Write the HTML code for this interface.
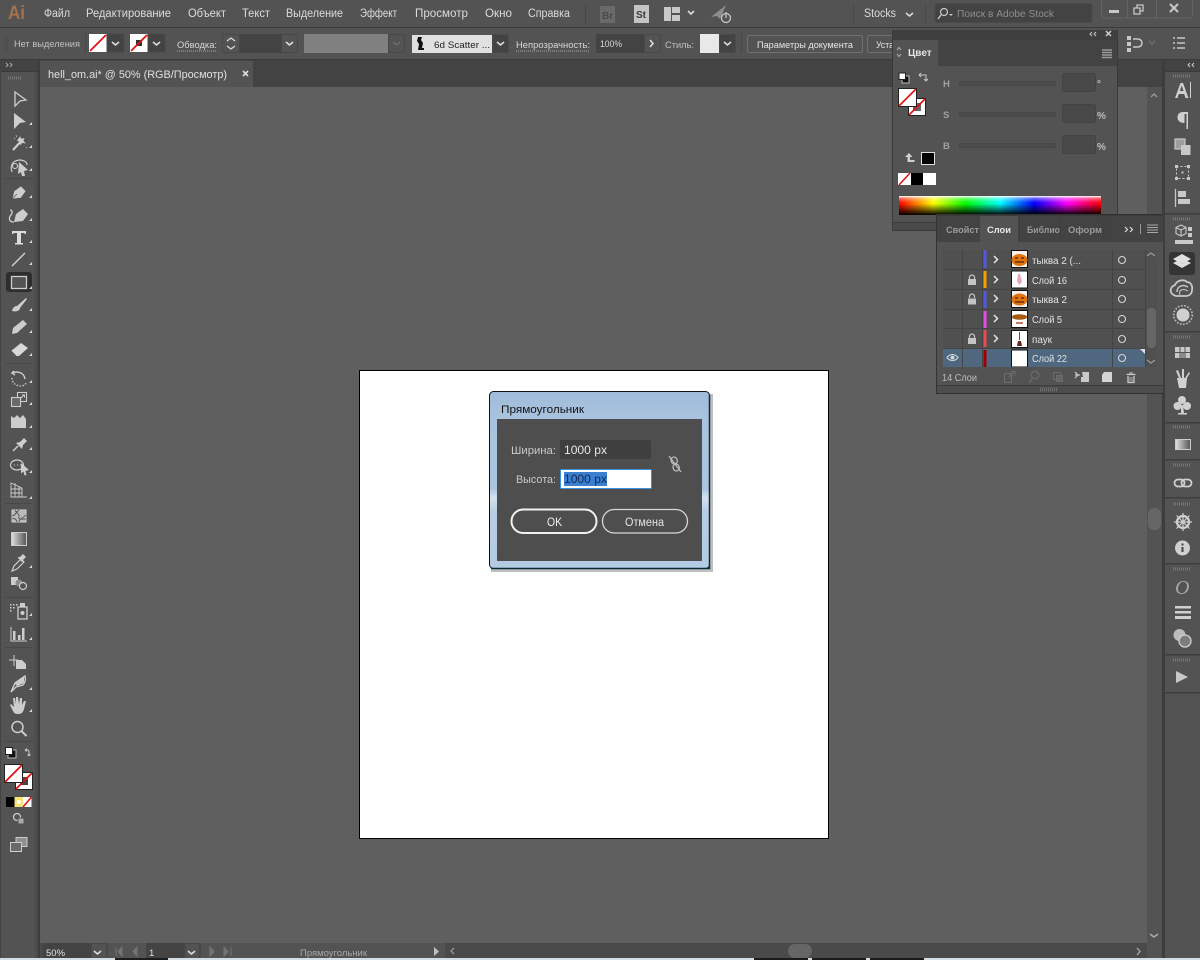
<!DOCTYPE html>
<html><head><meta charset="utf-8"><title>Illustrator</title>
<style>
html,body{margin:0;padding:0;background:#535353;width:1200px;height:960px;overflow:hidden}
svg{display:block;filter:blur(.3px)}
text{font-family:"Liberation Sans",sans-serif;font-size:11px;fill:#d4d4d4}
.m{font-size:11.5px;fill:#dcdcdc}
.c{font-size:9.5px;fill:#d8d8d8}
.ch{fill:none;stroke:#dcdcdc;stroke-width:1.6}
.d{fill:#434343}
.ln{font-size:10px;fill:#e2e2e2}
</style></head><body>
<svg width="1200" height="960" viewBox="0 0 1200 960" xmlns="http://www.w3.org/2000/svg">
<defs>
<linearGradient id="spec" x1="0" x2="1" y1="0" y2="0">
<stop offset="0" stop-color="#f00"/><stop offset=".17" stop-color="#ff0"/><stop offset=".33" stop-color="#0f0"/><stop offset=".5" stop-color="#0ff"/><stop offset=".67" stop-color="#00f"/><stop offset=".83" stop-color="#f0f"/><stop offset="1" stop-color="#f00"/></linearGradient>
<linearGradient id="specv" x1="0" x2="0" y1="0" y2="1">
<stop offset="0" stop-color="#fff"/><stop offset=".12" stop-color="#fff" stop-opacity=".4"/><stop offset=".35" stop-color="#fff" stop-opacity="0"/><stop offset=".4" stop-color="#000" stop-opacity="0"/><stop offset="1" stop-color="#000"/></linearGradient>
<linearGradient id="grad" x1="0" x2="1" y1="0" y2="0"><stop offset="0" stop-color="#e0e0e0"/><stop offset="1" stop-color="#555"/></linearGradient>
<linearGradient id="frame" x1="0" x2="0" y1="0" y2="1"><stop offset="0" stop-color="#a0bcd9"/><stop offset=".15" stop-color="#a9c3de"/><stop offset=".55" stop-color="#abc5df"/><stop offset=".6" stop-color="#d4e2ee"/><stop offset=".68" stop-color="#b7cde3"/><stop offset="1" stop-color="#b3cbe3"/></linearGradient>
</defs>

<!-- base -->
<rect width="1200" height="960" fill="#535353"/>
<rect x="0" y="27" width="1200" height="1" fill="#3a3a3a"/>
<rect x="0" y="59" width="1200" height="1" fill="#3a3a3a"/>
<!-- tab bar -->
<rect x="38" y="60" width="1125" height="27" fill="#434343"/>
<rect x="40" y="61" width="213" height="26" fill="#535353"/>
<text x="48" y="78" style="font-size:11px;fill:#e0e0e0" textLength="179" lengthAdjust="spacingAndGlyphs">hell_om.ai* @ 50% (RGB/Просмотр)</text>
<path d="M243 71l5 5M248 71l-5 5" stroke="#ddd" stroke-width="1.6"/>
<!-- canvas -->
<rect x="40" y="87" width="1107" height="856" fill="#5f5f5f"/>
<rect x="38" y="60" width="2" height="900" fill="#3d3d3d"/>
<!-- artboard -->
<rect x="359.5" y="370.5" width="469" height="468" fill="#fff" stroke="#000"/>
<!-- v scrollbar -->
<rect x="1147" y="87" width="15" height="856" fill="#535353"/>
<rect x="1162" y="60" width="3" height="900" fill="#3d3d3d"/>
<rect x="1148" y="508" width="13" height="22" rx="6" fill="#666"/>
<path d="M1151 97l3-3 3 3" fill="none" stroke="#999" stroke-width="1.4"/>
<path d="M1150 934l4 3 4-3" fill="none" stroke="#aaa" stroke-width="1.6"/>

<!-- menu bar -->
<text x="8" y="19" style="font-size:19px;font-weight:bold;fill:#a5714e" textLength="17" lengthAdjust="spacingAndGlyphs">Ai</text>
<text class="m" x="44" y="17" textLength="26" lengthAdjust="spacingAndGlyphs">Файл</text>
<text class="m" x="86" y="17" textLength="85" lengthAdjust="spacingAndGlyphs">Редактирование</text>
<text class="m" x="188" y="17" textLength="38" lengthAdjust="spacingAndGlyphs">Объект</text>
<text class="m" x="242" y="17" textLength="28" lengthAdjust="spacingAndGlyphs">Текст</text>
<text class="m" x="286" y="17" textLength="57" lengthAdjust="spacingAndGlyphs">Выделение</text>
<text class="m" x="360" y="17" textLength="37" lengthAdjust="spacingAndGlyphs">Эффект</text>
<text class="m" x="415" y="17" textLength="53" lengthAdjust="spacingAndGlyphs">Просмотр</text>
<text class="m" x="485" y="17" textLength="27" lengthAdjust="spacingAndGlyphs">Окно</text>
<text class="m" x="528" y="17" textLength="42" lengthAdjust="spacingAndGlyphs">Справка</text>
<rect x="585" y="4" width="1" height="20" fill="#484848"/>
<rect x="600" y="6" width="15" height="17" fill="#6a6a6a"/><text x="602" y="19" style="font-size:10px;fill:#4a4a4a;font-weight:bold">Br</text>
<rect x="634" y="5" width="15" height="18" fill="#c4c4c4"/><text x="636" y="18" style="font-size:10px;fill:#3a3a3a;font-weight:bold">St</text>
<path d="M664 7h7v14h-7zM672 7h8v6h-8zM672 15h8v6h-8z" fill="#c8c8c8"/>
<path d="M688 11l3 3 3-3" class="ch"/>
<path d="M711 17L726 5l-6 14-3-3z" fill="#8c8c8c"/>
<circle cx="726" cy="18" r="4.5" fill="#535353" stroke="#c4c4c4" stroke-width="1.3"/><path d="M726 12v6" stroke="#c4c4c4" stroke-width="1.3"/>
<rect x="853" y="4" width="1" height="20" fill="#484848"/>
<text class="m" x="864" y="17" textLength="32" lengthAdjust="spacingAndGlyphs">Stocks</text>
<path d="M906 13l3.500 3 3.500-3" class="ch"/>
<rect x="925" y="4" width="1" height="20" fill="#484848"/>
<rect x="935" y="3.500" width="157" height="19" rx="2" fill="#434343" stroke="#4a4a4a"/>
<circle cx="944" cy="12" r="3.500" fill="none" stroke="#c8c8c8" stroke-width="1.2"/><path d="M941 15l-3 4" stroke="#c8c8c8" stroke-width="1.4"/><path d="M949 14h4l-2 2z" fill="#c8c8c8"/>
<text x="957" y="17" style="font-size:10.500px;fill:#8e8e8e" textLength="97" lengthAdjust="spacingAndGlyphs">Поиск в Adobe Stock</text>
<rect x="1101.500" y="-2" width="91" height="20" rx="3" fill="#535353" stroke="#646464"/>
<path d="M1127.500 0v18M1156.500 0v18" stroke="#646464"/>
<rect x="1109" y="10" width="10" height="3" fill="#c8c8c8"/>
<path d="M1134 8h6v6h-6zM1137 8V5h6v6h-3" fill="none" stroke="#c8c8c8" stroke-width="1.3"/>
<path d="M1170 4l8 8M1178 4l-8 8" stroke="#c8c8c8" stroke-width="2"/>

<!-- control bar -->
<path d="M5 36v16M7 36v16" stroke="#444" stroke-dasharray="1 1"/>
<text class="c" x="14" y="47" textLength="66" lengthAdjust="spacingAndGlyphs" style="fill:#c0c0c0">Нет выделения</text>
<rect x="85" y="33" width="1" height="20" fill="#484848"/>
<rect x="89" y="34" width="18" height="18" fill="#fff"/><path d="M90 51L106 35" stroke="#e21010" stroke-width="1.800"/>
<rect x="107" y="34" width="17" height="18" class="d" stroke="#4a4a4a"/><path d="M112 42l3.500 3 3.500-3" class="ch"/>
<rect x="130" y="34" width="18" height="18" fill="#fff"/><rect x="136" y="40" width="6" height="6" fill="#333"/><path d="M131 51L147 35" stroke="#e21010" stroke-width="1.800"/>
<rect x="148" y="34" width="17" height="18" class="d" stroke="#4a4a4a"/><path d="M153 42l3.500 3 3.500-3" class="ch"/>
<text class="c" x="177" y="48" textLength="40" lengthAdjust="spacingAndGlyphs">Обводка:</text>
<path d="M177 51h40" stroke="#aaa" stroke-dasharray="1 1"/>
<rect x="222.500" y="34.500" width="17" height="18" fill="#535353" stroke="#484848"/>
<path d="M227 41l4-3 4 3M227 46l4 3 4-3" fill="none" stroke="#dcdcdc" stroke-width="1.200"/>
<rect x="240" y="34" width="41" height="19" fill="#434343"/>
<rect x="281.500" y="34.500" width="16" height="18" fill="#535353" stroke="#484848"/><path d="M286 42l3.500 3 3.500-3" class="ch"/>
<rect x="304" y="34" width="84" height="19" fill="#808080"/>
<rect x="388.500" y="34.500" width="16" height="18" fill="#535353" stroke="#484848"/><path d="M393 42l3.500 3 3.500-3" fill="none" stroke="#6f6f6f" stroke-width="1.400"/>
<rect x="412" y="35" width="80" height="18" fill="#e0e0e0"/>
<path d="M418 37h4l-1 3 2 3-1 5h2v2h-6l1-6-2-3z" fill="#111"/>
<text x="434" y="48" style="font-size:9.500px;fill:#222" textLength="56" lengthAdjust="spacingAndGlyphs">6d Scatter ...</text>
<rect x="492.500" y="34.500" width="16" height="18" fill="#434343" stroke="#4a4a4a"/><path d="M497 42l3.500 3 3.500-3" class="ch"/>
<text class="c" x="516" y="48" textLength="74" lengthAdjust="spacingAndGlyphs">Непрозрачность:</text>
<path d="M516 51h74" stroke="#aaa" stroke-dasharray="1 1"/>
<rect x="596" y="34" width="48" height="19" fill="#434343"/>
<text class="c" x="600" y="47" textLength="22" lengthAdjust="spacingAndGlyphs">100%</text>
<rect x="644.500" y="34.500" width="16" height="18" fill="#535353" stroke="#484848"/><path d="M650 40l3 3.500-3 3.500" class="ch"/>
<text class="c" x="665" y="48" textLength="29" lengthAdjust="spacingAndGlyphs" style="fill:#c0c0c0">Стиль:</text>
<rect x="700" y="34" width="19" height="19" fill="#e8e8e8"/>
<rect x="719.500" y="34.500" width="16" height="18" fill="#434343" stroke="#4a4a4a"/><path d="M724 42l3.500 3 3.500-3" class="ch"/>
<rect x="741" y="33" width="1" height="20" fill="#484848"/>
<rect x="747.500" y="35.500" width="115" height="17" rx="2" fill="#535353" stroke="#707070"/>
<text class="c" x="757" y="48" textLength="96" lengthAdjust="spacingAndGlyphs" style="fill:#e6e6e6">Параметры документа</text>
<rect x="867.500" y="35.500" width="40" height="17" rx="2" fill="#535353" stroke="#707070"/>
<text class="c" x="876" y="48" textLength="18" lengthAdjust="spacingAndGlyphs" style="fill:#e6e6e6">Уста</text>
<!-- right control icons -->
<path d="M1127 36h4v4h-4zM1127 42h4v4h-4zM1127 48h4v4h-4z" fill="#c8c8c8"/>
<path d="M1133 39h5a4 4 0 0 1 0 8h-5" fill="none" stroke="#c8c8c8" stroke-width="1.500"/>
<path d="M1149 41l3 3 3-3" fill="none" stroke="#6f6f6f" stroke-width="1.400"/>
<path d="M1173 38h2M1173 43h2M1173 48h2M1177 38h8M1177 43h8M1177 48h8" stroke="#c8c8c8" stroke-width="1.500"/>

<!-- left toolbar -->
<rect x="0" y="60" width="38" height="11" fill="#434343"/>
<rect x="0" y="71" width="38" height="1" fill="#3a3a3a"/>
<path d="M6 63l2 2-2 2M10 63l2 2-2 2" fill="none" stroke="#aaa"/>
<path d="M8 78h14" stroke="#777" stroke-width="3" stroke-dasharray="1 1"/>
<rect x="0" y="60" width="1" height="900" fill="#444"/>
<rect x="35" y="72" width="3" height="888" fill="#4c4c4c"/>
<g>
<path d="M15 92l11 8-6 1-5 5z" fill="none" stroke="#cdcdcd" stroke-width="1.300"/>
<path d="M14 113l12 9-6 1-6 6z" fill="#cdcdcd"/>
<path d="M13 150l10-11" stroke="#cdcdcd" stroke-width="2.200"/><path d="M20 137l1.500 2.500 2.500-1-1 2.500 2 2-3-.500-1.500 2-.5-3-2.500-1zM14 138l1 1M26 147l1 1M16 135l.5 2" fill="#cdcdcd" stroke="#cdcdcd" stroke-width=".7"/>
<path d="M12 172c-2-6 0-11 7-12 5 0 8 2 8 5" fill="none" stroke="#cdcdcd" stroke-width="1.200"/><circle cx="15" cy="166" r="2.500" fill="none" stroke="#cdcdcd" stroke-width="1.100"/><path d="M19 162l9 8-4 1 1 5-3 0-1-4-3 2z" fill="#cdcdcd"/>
<rect x="5" y="178" width="28" height="1" fill="#484848"/>
<path d="M12 199l2-8 7-5 5 5-5 7zM12 199l5-5" fill="#cdcdcd" stroke="#535353" stroke-width=".6"/>
<path d="M14 222l2-8 7-5 5 5-5 7z" fill="#cdcdcd"/><path d="M14 222c-6 0-5-5-3-7 2-3 1-5-1-5" fill="none" stroke="#cdcdcd" stroke-width="1.300"/>
<path d="M12 231h14v3h-1l-1-1h-3v10h2v1.500h-8V243h2v-10h-3l-1 1h-1z" fill="#dcdcdc"/>
<path d="M12 266l13-13" stroke="#cdcdcd" stroke-width="1.500"/>
<rect x="6" y="272" width="26" height="20" rx="3" fill="#2e2e2e"/>
<rect x="11.500" y="276.500" width="15" height="12" fill="#535353" stroke="#cdcdcd" stroke-width="1.300"/>
<path d="M12 311c1-4 3-5 5-5l9-8 1 1-7 9c0 3-4 4-8 3z" fill="#cdcdcd"/>
<path d="M12 334l1-6 10-8 4 4-10 9zM14 330l3 3" fill="#cdcdcd"/>
<path d="M11 351l10-8 7 5-9 8h-4z" fill="#d8d8d8"/><path d="M11 351l5 5" stroke="#535353"/>
<rect x="5" y="363" width="28" height="1" fill="#484848"/>
<path d="M14 371l-2 2 3 2M12 373c5-2 12-1 13 6" fill="none" stroke="#cdcdcd" stroke-width="1.400"/><path d="M12 378c0 5 4 8 9 8 3 0 5-2 5-3" fill="none" stroke="#cdcdcd" stroke-width="1.300" stroke-dasharray="1.500 1.500"/>
<rect x="17.500" y="392.500" width="9" height="9" fill="none" stroke="#cdcdcd" stroke-width="1.100"/><rect x="11.500" y="397.500" width="9" height="9" fill="#6a6a6a" stroke="#cdcdcd" stroke-width="1.100"/><path d="M20 399l4-4M22 395h2.500v2.500" stroke="#cdcdcd" fill="none"/>
<path d="M11 428v-12l3 2 3-3 3 3 3-3 3 4v9z" fill="#cdcdcd"/>
<path d="M13 451l5-5" stroke="#cdcdcd" stroke-width="1.500"/><path d="M16 443l4-1 4-4 3 3-4 4-1 4z" fill="#cdcdcd"/>
<ellipse cx="17" cy="465" rx="6.500" ry="5" fill="none" stroke="#cdcdcd" stroke-width="1.200"/><path d="M14 465h1M17 465h1M20 465h1" stroke="#cdcdcd"/><path d="M21 463l8 7-3.500 1 1 4-2 .5-1-4-2.500 2z" fill="#cdcdcd"/>
<path d="M11 483l11 5v9h-11zM11 489h11M11 493h11M15 483v14M19 486v11" fill="none" stroke="#cdcdcd" stroke-width=".9"/><path d="M22 497h5" stroke="#cdcdcd"/>
<rect x="5" y="503" width="28" height="1" fill="#484848"/>
<rect x="12" y="510" width="14" height="12" fill="#b8b8b8" stroke="#d0d0d0"/><path d="M12 516c4-1 4-4 7-6M15 510c1 3 5 4 4 7s3 2 7 2M19 522c0-3 3-3 7-7M12 519c3-1 4 0 5 3" fill="none" stroke="#444" stroke-width=".8"/>
<rect x="11.500" y="532.500" width="15" height="13" fill="url(#grad)" stroke="#ccc"/>
<path d="M12 571l2-5 7-7 3 3-7 7z" fill="#535353" stroke="#cdcdcd" stroke-width="1.200"/><path d="M20 557l3-3 3 3-3 3 1 2-2 0-4-4v-1z" fill="#cdcdcd"/>
<rect x="11" y="577" width="7" height="8" fill="#cdcdcd"/><circle cx="19" cy="583" r="3.500" fill="#8b8b8b"/><circle cx="23" cy="586" r="3.500" fill="#535353" stroke="#cdcdcd" stroke-width="1.200"/>
<rect x="5" y="597" width="28" height="1" fill="#484848"/>
<path d="M10 604h1.500v1.500H10zM13 604h1.500v1.500H13zM16 604h1.500v1.500H16zM10 607h1.500v1.500H10zM13 607h1.500v1.500H13zM10 610h1.500v1.500H10z" fill="#cdcdcd"/>
<rect x="18" y="607" width="9" height="12" fill="none" stroke="#cdcdcd" stroke-width="1.300"/><rect x="20" y="603" width="5" height="4" fill="#cdcdcd"/><circle cx="22.500" cy="613" r="2" fill="#cdcdcd"/>
<path d="M11 627v14h16" fill="none" stroke="#cdcdcd"/><path d="M13 631h2.500v9H13zM18 635h2.500v5H18zM22 628h2.500v12H22z" fill="#cdcdcd"/>
<rect x="5" y="647" width="28" height="1" fill="#484848"/>
<path d="M9 660h9M14 655v11" stroke="#cdcdcd"/><path d="M16 660h6l4 4v5H16z" fill="#cdcdcd"/>
<path d="M11 692l4-9 10-7c1 3 0 7-2 9l-7 2z" fill="none" stroke="#cdcdcd" stroke-width="1.400"/><path d="M15 684l9-7 0 6-7 3z" fill="#cdcdcd"/>
<path d="M13 711l-3-6 1-1 3 3-1-9h2l1 6 0-7h2l1 7 1-6h2l0 7 2-4h2l-2 8c-1 4-3 5-6 5s-4-1-5-3z" fill="#cdcdcd"/>
<circle cx="17.500" cy="727" r="5.500" fill="none" stroke="#cdcdcd" stroke-width="1.500"/><path d="M21.500 731l5 5" stroke="#cdcdcd" stroke-width="2"/>
<rect x="5" y="741" width="28" height="1" fill="#484848"/>
<rect x="8" y="750" width="8" height="8" fill="#111" stroke="#bbb"/><rect x="5.500" y="747.500" width="7" height="7" fill="#fff" stroke="#222"/>
<path d="M25 750h3l1 1v5M25 750l2-1.500M25 750l2 1.500M29 756l-1.500-1.500M29 756l1.500-1.500" fill="none" stroke="#c8c8c8" stroke-width="1"/>
<rect x="15.500" y="772.500" width="17" height="17" fill="#fff" stroke="#222"/><rect x="20" y="777" width="8" height="8" fill="#444"/><path d="M16 789l16-16" stroke="#e21010" stroke-width="1.800"/>
<rect x="4.500" y="764.500" width="18" height="18" fill="#fff" stroke="#222"/><path d="M5 782l17-17" stroke="#e21010" stroke-width="1.800"/>
<rect x="6" y="797" width="8.500" height="10" fill="#000"/><rect x="14.500" y="797" width="8.500" height="10" fill="#f7e27a"/><rect x="17" y="800" width="3.500" height="4" fill="#fff"/><rect x="23" y="797" width="8.500" height="10" fill="#fff"/><path d="M23 807l8.500-10" stroke="#e21010" stroke-width="1.500"/>
<circle cx="17" cy="817" r="3.500" fill="none" stroke="#cdcdcd" stroke-width="1.300"/><rect x="18" y="818" width="6" height="6" fill="#aaa" stroke="#535353"/>
<rect x="16" y="837.500" width="11" height="9" fill="#8f8f8f" stroke="#cdcdcd"/><rect x="10.500" y="842.500" width="11" height="9" fill="#6a6a6a" stroke="#cdcdcd"/>
</g>
<!-- corner flyout triangles -->
<g fill="#d8d8d8">
<path d="M32 125h-3l3-3zM32 148h-3l3-3zM32 171h-3l3-3zM32 198h-3l3-3zM32 221h-3l3-3zM32 243h-3l3-3zM32 265h-3l3-3zM32 289h-3l3-3zM32 311h-3l3-3zM32 333h-3l3-3zM32 356h-3l3-3zM32 383h-3l3-3zM32 405h-3l3-3zM32 428h-3l3-3zM32 450h-3l3-3zM32 473h-3l3-3zM32 499h-3l3-3zM32 568h-3l3-3zM32 616h-3l3-3zM32 640h-3l3-3zM32 690h-3l3-3zM32 712h-3l3-3z"/>
</g>

<!-- right dock -->
<rect x="1165" y="60" width="35" height="11" fill="#434343"/>
<path d="M1190 63l-2 2 2 2M1194 63l-2 2 2 2" fill="none" stroke="#ccc"/>
<rect x="1165" y="71" width="35" height="1" fill="#3a3a3a"/>
<g fill="#3e3e3e">
<rect x="1165" y="213" width="35" height="1.500"/><rect x="1165" y="331" width="35" height="1.500"/><rect x="1165" y="422" width="35" height="1.500"/><rect x="1165" y="459" width="35" height="1.500"/><rect x="1165" y="497" width="35" height="1.500"/><rect x="1165" y="563" width="35" height="1.500"/><rect x="1165" y="654" width="35" height="1.500"/><rect x="1165" y="692" width="35" height="1.500"/>
</g>
<g stroke="#777" stroke-width="3" stroke-dasharray="1 1" fill="none">
<path d="M1173 76h18M1173 219h18M1173 337h18M1173 427h18M1173 465h18M1173 504h18M1173 569h18M1173 660h18"/>
</g>
<path d="M1175 98l5.500-15h2.500l5.500 15h-3l-1.300-4h-5.400l-1.300 4zM1179.800 91h3.800l-1.900-5.500z" fill="#d0d0d0"/><path d="M1190.500 82v16" stroke="#d0d0d0"/>
<path d="M1183 112h5v17h-1.500v-15h-2v9c-4 0-7-2-7-5.500s2-5.500 5.500-5.500z" fill="#d0d0d0"/>
<rect x="1175" y="139" width="10" height="10" fill="#9d9d9d" stroke="#c8c8c8" stroke-width="1.200"/><rect x="1181" y="145" width="9.500" height="10" fill="#c8c8c8"/>
<rect x="1176.500" y="166.500" width="12" height="12" fill="none" stroke="#c8c8c8" stroke-dasharray="2 2"/><path d="M1175 165h3v3h-3zM1187 165h3v3h-3zM1175 177h3v3h-3zM1187 177h3v3h-3z" fill="#c8c8c8"/><rect x="1181.500" y="171.500" width="2" height="2" fill="#c8c8c8"/>
<path d="M1175.500 189v18" stroke="#c8c8c8" stroke-width="1.300"/><path d="M1178 191h8v6h-8zM1178 199h12v5h-12z" fill="#c8c8c8"/>
<path d="M1181 225l5 2.500v6l-5 2.500-5-2.500v-6zM1176 227.500l5 2.500 5-2.500M1181 230v6" fill="none" stroke="#c8c8c8" stroke-width="1.100"/>
<path d="M1188 227h4v4h-4zM1188 233h4v4h-4zM1175 240h18v4h-18z" fill="#c8c8c8"/>
<rect x="1169" y="252" width="26" height="23" rx="3" fill="#353535"/>
<path d="M1182 254l9 5-9 5-9-5z" fill="#e0e0e0"/><path d="M1173 263l4-2 5 3 5-3 4 2-9 5z" fill="#e0e0e0"/>
<path d="M1176 296a8 6 0 0 1 -1-11c2-5 9-6 12-3 3 0 6 3 5 8 0 4-3 6-6 6z" fill="none" stroke="#c8c8c8" stroke-width="1.800"/><path d="M1177 292c0-6 6-8 11-5" fill="none" stroke="#c8c8c8" stroke-width="1.400"/><path d="M1180 295c-2-5 3-7 8-4" fill="none" stroke="#c8c8c8"/>
<circle cx="1183" cy="315" r="6.500" fill="#d0d0d0"/><circle cx="1183" cy="315" r="9.300" fill="none" stroke="#c0c0c0" stroke-width="1.600" stroke-dasharray="1.600 1.600"/>
<rect x="1175" y="347" width="15" height="11" fill="#c8c8c8"/><path d="M1175 352.500h15M1180 347v11M1185 347v11" stroke="#535353"/><rect x="1180" y="353" width="5" height="5" fill="#8a8a8a"/>
<path d="M1177 378h10l-1 10h-7z" fill="#d0d0d0"/><path d="M1179 378l-3-7 2-1 3 8M1182 378v-9h2v9M1185 378l4-6 1 1-3 5" fill="#d0d0d0"/>
<circle cx="1182" cy="400" r="4" fill="#d0d0d0"/><circle cx="1177.500" cy="406" r="4" fill="#d0d0d0"/><circle cx="1187" cy="406" r="4" fill="#d0d0d0"/><path d="M1181 405h2l1 8h3v1.500h-9V413h3z" fill="#d0d0d0"/>
<rect x="1175.500" y="439.500" width="15" height="10" fill="url(#grad)" stroke="#ccc"/>
<rect x="1174.500" y="479.500" width="10" height="7" rx="3.500" fill="none" stroke="#d0d0d0" stroke-width="1.800"/><rect x="1181.500" y="479.500" width="10" height="7" rx="3.500" fill="none" stroke="#d0d0d0" stroke-width="1.800"/>
<circle cx="1183" cy="522" r="6" fill="none" stroke="#d0d0d0" stroke-width="2.200"/><circle cx="1183" cy="522" r="1.700" fill="#d0d0d0"/><path d="M1183 513v18M1174 522h18M1176.500 515.500l13 13M1189.500 515.500l-13 13" stroke="#d0d0d0" stroke-width="1.200"/>
<circle cx="1182.500" cy="548" r="7.500" fill="#d0d0d0"/><rect x="1181.500" y="547" width="2" height="5" fill="#444"/><rect x="1181.500" y="543.500" width="2" height="2" fill="#444"/>
<text x="1175" y="594" style="font-size:20px;font-style:italic;font-family:'Liberation Serif',serif;fill:#a6a6a6">O</text>
<path d="M1175 606h16v2.500h-16zM1175 611h16v2.500h-16zM1175 616h16v3h-16z" fill="#d0d0d0"/>
<circle cx="1179.500" cy="635" r="6" fill="#bbb"/><circle cx="1185" cy="641" r="6" fill="#7d7d7d" stroke="#d0d0d0" stroke-width="1.300"/>
<path d="M1176 671l12 6-12 6z" fill="#c8c8c8"/>

<!-- colour panel -->
<rect x="893" y="30" width="224" height="200" fill="#535353"/>
<rect x="893" y="30" width="224" height="12" fill="#3f3f3f"/>
<rect x="893" y="40" width="224" height="26" fill="#434343"/>
<rect x="893" y="40" width="45" height="26" fill="#535353"/>
<rect x="892" y="30" width="1" height="201" fill="#3a3a3a"/>
<rect x="1117" y="30" width="1" height="200" fill="#3a3a3a"/>
<path d="M1092 32l-2 2 2 2M1096 32l-2 2 2 2" fill="none" stroke="#ccc"/>
<path d="M1106 31l5 5M1111 31l-5 5" stroke="#ccc" stroke-width="1.500"/>
<path d="M897 50l2-2.500 2 2.500M897 54l2 2.500 2-2.500" fill="none" stroke="#bbb" stroke-width=".9"/>
<text x="908" y="56" style="font-size:10px;font-weight:bold;fill:#e4e4e4">Цвет</text>
<path d="M1102 50h10M1102 52.500h10M1102 55h10M1102 57.500h10" stroke="#999" stroke-width="1.500"/>
<rect x="902" y="76" width="7" height="7" fill="#111" stroke="#bbb"/><rect x="899" y="73" width="6.500" height="6.500" fill="#fff" stroke="#222"/>
<path d="M919 75h4l3 0v6M919 75l2-2M919 75l2 2M926 81l-2-2M926 81l2-2" fill="none" stroke="#c8c8c8" stroke-width="1"/>
<rect x="908.500" y="98.500" width="17" height="17" fill="#fff" stroke="#222"/><rect x="913" y="103" width="8" height="8" fill="#666"/><path d="M909 115l16-16" stroke="#e21010" stroke-width="1.600"/>
<rect x="898.500" y="88.500" width="18" height="18" fill="#fff" stroke="#222"/><path d="M899 106l17-17" stroke="#e21010" stroke-width="1.600"/>
<text x="943" y="87" style="font-size:9.500px;font-weight:bold;fill:#a0a0a0">H</text>
<text x="943" y="118" style="font-size:9.500px;font-weight:bold;fill:#a0a0a0">S</text>
<text x="943" y="149" style="font-size:9.500px;font-weight:bold;fill:#a0a0a0">B</text>
<g fill="#4c4c4c" stroke="#484848">
<rect x="959.500" y="81.500" width="96" height="4"/><rect x="959.500" y="112.500" width="96" height="4"/><rect x="959.500" y="143.500" width="96" height="4"/>
</g>
<g fill="#494949" stroke="#434343">
<rect x="1062.500" y="73.500" width="33" height="18" rx="2"/><rect x="1062.500" y="104.500" width="33" height="18" rx="2"/><rect x="1062.500" y="135.500" width="33" height="18" rx="2"/>
</g>
<text x="1097" y="87" style="font-size:10px;font-weight:bold;fill:#bdbdbd">°</text>
<text x="1097" y="119" style="font-size:10px;font-weight:bold;fill:#bdbdbd">%</text>
<text x="1097" y="150" style="font-size:10px;font-weight:bold;fill:#bdbdbd">%</text>
<path d="M909 153l-4 4h2.500v5h7v-2h-4.500v-3h2.500z" fill="#d0d0d0"/>
<rect x="921.500" y="152.500" width="13" height="12" fill="#000" stroke="#ddd"/>
<rect x="898" y="173" width="13" height="12" fill="#fff"/><path d="M899 185l11-12" stroke="#e21010" stroke-width="1.500"/>
<rect x="911" y="173" width="12" height="12" fill="#000"/><rect x="923" y="173" width="13" height="12" fill="#fff"/>
<rect x="899" y="196" width="202" height="19" fill="url(#spec)"/><rect x="899" y="196" width="202" height="19" fill="url(#specv)"/>
<rect x="893" y="222" width="224" height="1" fill="#3c3c3c"/>
<rect x="893" y="223" width="224" height="7" fill="#4a4a4a"/>
<rect x="892" y="230" width="226" height="1" fill="#3a3a3a"/>

<!-- layers panel -->
<rect x="937" y="214" width="226" height="180" fill="#535353"/>
<rect x="937" y="215" width="226" height="27" fill="#434343"/>
<rect x="980" y="216" width="38" height="26" fill="#535353"/>
<rect x="936" y="214" width="1" height="180" fill="#333"/><rect x="937" y="214" width="226" height="1.500" fill="#333"/>
<text x="946" y="233" style="font-size:9.500px;font-weight:bold;fill:#9a9a9a" textLength="33" lengthAdjust="spacingAndGlyphs">Свойст</text>
<text x="987" y="233" style="font-size:9.500px;font-weight:bold;fill:#e8e8e8" textLength="24" lengthAdjust="spacingAndGlyphs">Слои</text>
<text x="1027" y="233" style="font-size:9.500px;font-weight:bold;fill:#9a9a9a" textLength="33" lengthAdjust="spacingAndGlyphs">Библио</text>
<text x="1068" y="233" style="font-size:9.500px;font-weight:bold;fill:#9a9a9a" textLength="34" lengthAdjust="spacingAndGlyphs">Оформ</text>
<path d="M1060 216v26M1019 216v26M1104 216v26" stroke="#3c3c3c"/>
<path d="M1125 227l2.500 2.500-2.500 2.500M1130 227l2.500 2.500-2.500 2.500" fill="none" stroke="#ddd" stroke-width="1.200"/>
<rect x="1140" y="224" width="1" height="10" fill="#999"/>
<path d="M1147 225h11M1147 227.500h11M1147 230h11M1147 232.500h11" stroke="#aaa"/>
<!-- list -->
<rect x="943" y="250" width="214" height="117" fill="#505050"/>
<rect x="943" y="348" width="202" height="19" fill="#4f6880"/>
<g fill="#444">
<rect x="943" y="269" width="202" height="1"/><rect x="943" y="289" width="202" height="1"/><rect x="943" y="309" width="202" height="1"/><rect x="943" y="328" width="202" height="1"/><rect x="943" y="348" width="202" height="1"/>
<rect x="962" y="250" width="1" height="117"/><rect x="982" y="250" width="1" height="117"/><rect x="1112" y="250" width="1" height="117"/><rect x="1145" y="250" width="1" height="117"/>
</g>
<!-- color bars -->
<rect x="983.500" y="250" width="3" height="18" fill="#5457e0"/>
<rect x="983.500" y="271" width="3" height="17" fill="#f5a000"/>
<rect x="983.500" y="291" width="3" height="17" fill="#5457e0"/>
<rect x="983.500" y="311" width="3" height="17" fill="#e34de3"/>
<rect x="983.500" y="330" width="3" height="17" fill="#e84c4c"/>
<rect x="983.500" y="350" width="3" height="17" fill="#a00000"/>
<!-- arrows -->
<g fill="none" stroke="#e4e4e4" stroke-width="1.500">
<path d="M994 256l3.500 3.500-3.500 3.500M994 276l3.500 3.500-3.500 3.500M994 295l3.500 3.500-3.500 3.500M994 315l3.500 3.500-3.500 3.500M994 335l3.500 3.500-3.500 3.500"/>
</g>
<!-- thumbs -->
<rect x="1011" y="250" width="17" height="18" fill="#111"/><rect x="1012" y="251" width="15" height="16" fill="#f4efe8"/>
<ellipse cx="1019.500" cy="260" rx="8" ry="6" fill="#e0740e"/><path d="M1015 258h3M1021 258h3M1015 262h9" stroke="#521" stroke-width="1.200"/>
<rect x="1011" y="270.500" width="17" height="18" fill="#111"/><rect x="1012" y="271.500" width="15" height="16" fill="#fff"/><path d="M1018 274l2 0 2 8-3 3-2-4z" fill="#e8a8b8"/>
<rect x="1011" y="290" width="17" height="18" fill="#111"/><rect x="1012" y="291" width="15" height="16" fill="#f4efe8"/>
<ellipse cx="1019.500" cy="299.500" rx="8" ry="6" fill="#e0740e"/><path d="M1015 298h3M1021 298h3M1015 302h9" stroke="#521" stroke-width="1.200"/>
<rect x="1011" y="310" width="17" height="18" fill="#111"/><rect x="1012" y="311" width="15" height="16" fill="#fff"/><ellipse cx="1019.500" cy="317" rx="7.500" ry="2.800" fill="#a65a10"/><rect x="1016" y="322" width="7" height="2" fill="#c76"/>
<rect x="1011" y="330" width="17" height="18" fill="#111"/><rect x="1012" y="331" width="15" height="16" fill="#fff"/><path d="M1019.500 332v8" stroke="#555"/><path d="M1017 346l1-5h3l1 5z" fill="#622"/>
<rect x="1011" y="349.500" width="17" height="17.500" fill="#111"/><rect x="1012" y="350.500" width="15" height="16" fill="#fff"/>
<!-- names -->
<text class="ln" x="1032" y="264" textLength="49" lengthAdjust="spacingAndGlyphs">тыква 2 (...</text>
<text class="ln" x="1032" y="284" textLength="35" lengthAdjust="spacingAndGlyphs">Слой 16</text>
<text class="ln" x="1032" y="303" textLength="35" lengthAdjust="spacingAndGlyphs">тыква 2</text>
<text class="ln" x="1032" y="323" textLength="30" lengthAdjust="spacingAndGlyphs">Слой 5</text>
<text class="ln" x="1032" y="343" textLength="20" lengthAdjust="spacingAndGlyphs">паук</text>
<text class="ln" x="1032" y="362" textLength="35" lengthAdjust="spacingAndGlyphs">Слой 22</text>
<!-- circles -->
<g fill="none" stroke="#d4d4d4" stroke-width="1.100">
<circle cx="1122" cy="260" r="3.500"/><circle cx="1122" cy="280" r="3.500"/><circle cx="1122" cy="299" r="3.500"/><circle cx="1122" cy="319" r="3.500"/><circle cx="1122" cy="339" r="3.500"/><circle cx="1122" cy="358" r="3.500"/>
</g>
<path d="M1145 349v5l-5-5z" fill="#e0e0e0"/>
<!-- locks -->
<g fill="#c4c4c4">
<path d="M968 279h8v6h-8z"/><path d="M969.500 279v-1.500a2.500 2.500 0 0 1 5 0v1.500" fill="none" stroke="#c4c4c4" stroke-width="1.200"/>
<path d="M968 298.500h8v6h-8z"/><path d="M969.500 298v-1.500a2.500 2.500 0 0 1 5 0v1.500" fill="none" stroke="#c4c4c4" stroke-width="1.200"/>
<path d="M968 338h8v6h-8z"/><path d="M969.500 338v-1.500a2.500 2.500 0 0 1 5 0v1.500" fill="none" stroke="#c4c4c4" stroke-width="1.200"/>
</g>
<!-- eye -->
<path d="M947 357.500c3-4 8-4 11 0-3 4-8 4-11 0z" fill="none" stroke="#cfd6dc" stroke-width="1.100"/><circle cx="952.500" cy="357.500" r="2" fill="#cfd6dc"/>
<!-- list scrollbar -->
<rect x="1147" y="308" width="9" height="40" rx="4" fill="#666"/>
<path d="M1147 256l4-3 4 3" fill="none" stroke="#999" stroke-width="1.300"/>
<path d="M1147 360l4 3 4-3" fill="none" stroke="#999" stroke-width="1.300"/>
<!-- footer -->
<text x="942" y="381" style="font-size:10px;fill:#bcbcbc" textLength="35" lengthAdjust="spacingAndGlyphs">14 Слои</text>
<path d="M1004.500 373.500h7v9h-7zM1009 377l5-5M1011 371.500h4v4" fill="none" stroke="#6c6c6c" stroke-width="1.100"/>
<circle cx="1035" cy="375" r="3.800" fill="none" stroke="#6c6c6c" stroke-width="1.200"/><path d="M1032 379l-3 3.500" stroke="#6c6c6c" stroke-width="1.400"/>
<rect x="1053.500" y="372.500" width="7" height="7" fill="none" stroke="#6c6c6c"/><rect x="1056.500" y="375.500" width="6" height="6" fill="#666" stroke="#6c6c6c"/>
<path d="M1075 372l3 3-3 3M1075 375h5" fill="none" stroke="#c8c8c8" stroke-width="1.200"/><path d="M1082 372h7v10h-8v-5h2z" fill="#c8c8c8"/>
<path d="M1104 372h8v10h-10v-7z" fill="#d4d4d4"/>
<path d="M1126.500 374.500h9M1128 376v6.500h6V376" fill="none" stroke="#c8c8c8" stroke-width="1.300"/><path d="M1129 373h4" stroke="#c8c8c8"/><path d="M1130 377v4.500M1132 377v4.500" stroke="#c8c8c8" stroke-width=".8"/>
<rect x="937" y="385" width="226" height="1" fill="#3c3c3c"/>
<rect x="937" y="386" width="226" height="7" fill="#4d4d4d"/>
<path d="M1040 389.500h18" stroke="#6f6f6f" stroke-width="4" stroke-dasharray="1 1"/>
<rect x="936" y="393" width="228" height="1" fill="#333"/>

<!-- dialog -->
<rect x="491" y="394" width="222" height="178" fill="#000" opacity=".25"/>
<rect x="489.500" y="391.500" width="220" height="177" rx="4" fill="url(#frame)" stroke="#111"/>
<path d="M709.500 395v173.500H491" fill="none" stroke="#0b2a3a" stroke-width="1.500"/>
<rect x="497" y="419" width="205" height="142" fill="#4e4e4e"/>
<text x="501" y="413" style="font-size:11px;fill:#111" textLength="83" lengthAdjust="spacingAndGlyphs">Прямоугольник</text>
<text x="511" y="454" style="font-size:11px;fill:#c9c9c9" textLength="45" lengthAdjust="spacingAndGlyphs">Ширина:</text>
<rect x="560" y="440" width="91" height="19" rx="1.500" fill="#3f3f3f"/>
<text x="564" y="454" style="font-size:11.500px;fill:#e8e8e8" textLength="43" lengthAdjust="spacingAndGlyphs">1000 px</text>
<text x="516" y="483" style="font-size:11px;fill:#c9c9c9" textLength="40" lengthAdjust="spacingAndGlyphs">Высота:</text>
<rect x="560.500" y="469.500" width="91" height="19" rx="1" fill="#fff" stroke="#3d8fe0"/>
<rect x="564" y="472" width="43" height="14" fill="#3a7fd0"/>
<text x="564" y="483" style="font-size:11.500px;fill:#0c2a55" textLength="43" lengthAdjust="spacingAndGlyphs">1000 px</text>
<g fill="none" stroke="#bbb" stroke-width="1.300">
<rect x="671" y="457" width="6" height="7" rx="3" transform="rotate(-20 674 460)"/><rect x="673" y="464" width="6" height="7" rx="3" transform="rotate(-20 676 467)"/><path d="M669 456l12 16"/>
</g>
<rect x="511.500" y="509.500" width="85" height="23.500" rx="11.700" fill="#4e4e4e" stroke="#f2f2f2" stroke-width="2"/>
<text x="547" y="526" style="font-size:11.500px;fill:#f0f0f0" textLength="15" lengthAdjust="spacingAndGlyphs">OK</text>
<rect x="602.500" y="509.500" width="85" height="23.500" rx="11.700" fill="#4e4e4e" stroke="#d8d8d8" stroke-width="1.300"/>
<text x="625" y="526" style="font-size:11.500px;fill:#e4e4e4" textLength="39" lengthAdjust="spacingAndGlyphs">Отмена</text>

<!-- status bar -->
<rect x="40" y="943" width="1107" height="15" fill="#4a4a4a"/>
<rect x="43" y="943" width="48" height="15" fill="#434343"/>
<text x="46" y="956" style="font-size:9.500px;fill:#e0e0e0">50%</text>
<rect x="91.500" y="943.500" width="15" height="15" fill="#535353" stroke="#484848"/><path d="M94 951l3.500 3 3.500-3" class="ch"/>
<rect x="108" y="943" width="38" height="15" fill="#535353"/>
<path d="M116 947v9M122 947l-4 4.500 4 4.500zM137 947l-4 4.500 4 4.500z" fill="#737373" stroke="#737373"/>
<rect x="146" y="943" width="38" height="15" fill="#434343"/>
<text x="149" y="956" style="font-size:9.500px;fill:#e0e0e0">1</text>
<rect x="185.500" y="943.500" width="14" height="15" fill="#535353" stroke="#484848"/><path d="M188 951l3.500 3 3.500-3" class="ch"/>
<rect x="201" y="943" width="39" height="15" fill="#535353"/>
<path d="M210 947l4 4.500-4 4.500zM224 947l4 4.500-4 4.500zM231 947v9" fill="#737373" stroke="#737373"/>
<rect x="240" y="943" width="188" height="15" fill="#535353"/>
<text x="300" y="956" style="font-size:9.500px;fill:#a8a8a8" textLength="67" lengthAdjust="spacingAndGlyphs">Прямоугольник</text>
<rect x="428" y="943" width="17" height="15" fill="#535353"/>
<path d="M434 947l5 4.500-5 4.500z" fill="#c0c0c0"/>
<path d="M454 948l-3 3 3 3" fill="none" stroke="#999" stroke-width="1.300"/>
<rect x="788" y="944" width="24" height="14" rx="7" fill="#666"/>
<path d="M1137 948l3 3.500-3 3.500" fill="none" stroke="#aaa" stroke-width="1.300"/>
<rect x="1147" y="943" width="15" height="15" fill="#535353"/>
<!-- taskbar strip -->
<rect x="0" y="958" width="1200" height="2" fill="#d5dde4"/>
<rect x="115" y="958" width="53" height="2" fill="#1c1c1c"/>
<rect x="754" y="958" width="54" height="2" fill="#1c1c1c"/><rect x="812" y="958" width="54" height="2" fill="#1c1c1c"/><rect x="870" y="958" width="54" height="2" fill="#1c1c1c"/>
</svg>
</body></html>
